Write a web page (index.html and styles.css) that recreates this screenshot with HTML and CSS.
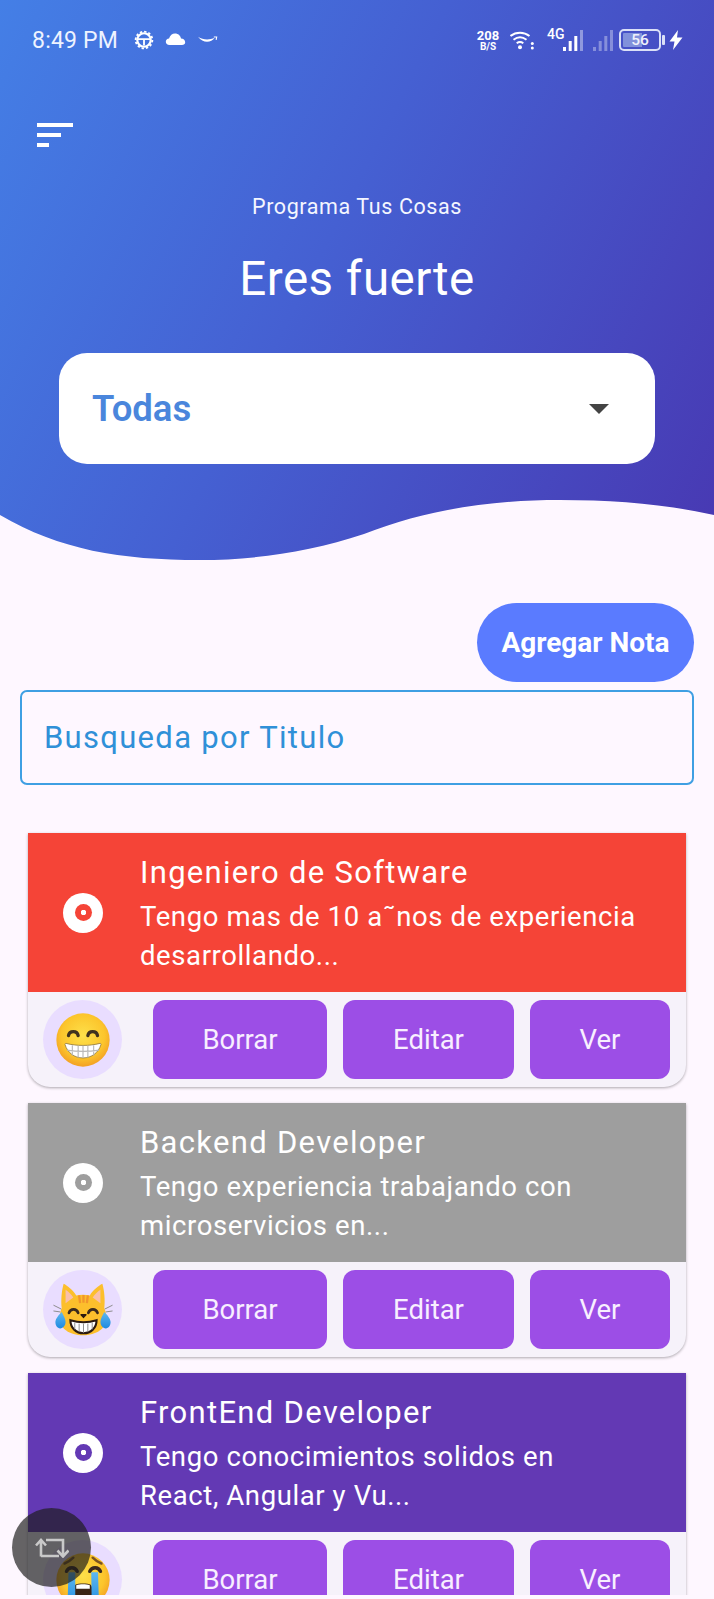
FILE: index.html
```html
<!DOCTYPE html>
<html lang="es">
<head>
<meta charset="utf-8">
<title>Programa Tus Cosas</title>
<link rel="stylesheet" href="styles.css">
</head>
<body>
<svg class="defs" width="0" height="0" aria-hidden="true">
  <defs>
    <radialGradient id="yel" cx="50%" cy="42%" r="58%">
      <stop offset="0" stop-color="#fde04a"/>
      <stop offset="0.7" stop-color="#fcc52c"/>
      <stop offset="1" stop-color="#f3a024"/>
    </radialGradient>
    <linearGradient id="tear" x1="0" y1="0" x2="0" y2="1">
      <stop offset="0" stop-color="#5fb8f0"/>
      <stop offset="1" stop-color="#1f8ae0"/>
    </linearGradient>
  </defs>
</svg>
<div class="app">
  <header class="hero">
    <div class="status">
      <div class="status-left">
        <span class="clock">8:49 PM</span>
        <svg class="ic-gear" viewBox="0 0 22 22"><circle cx="11" cy="11" r="7.400" fill="none" stroke="#fff" stroke-width="2.400"/><circle cx="11" cy="11" r="9.200" fill="none" stroke="#fff" stroke-width="2" stroke-dasharray="2.600 2.200"/><path d="M4 10h14M11 10v7" stroke="#fff" stroke-width="2" fill="none"/></svg>
        <svg class="ic-cloud" viewBox="0 0 22 13"><path d="M4.500 13C2 13 0.500 11.500 0.500 9.500 0.500 7.600 2 6.200 4 6 5 2.500 7.500 0.500 10.500 0.500 14 0.500 16.500 2.800 17 6 19.500 6.200 21.500 7.500 21.500 10 21.500 11.800 20 13 18 13Z" fill="#fff"/></svg>
        <svg class="ic-smile" viewBox="0 0 22 10"><path d="M0.500 2C6 5.500 13 5.800 19 3 15 9 6 9.500 0.500 2Z" fill="#fff"/><path d="M18 2.200 21.200 2.300 20.600 5.500" fill="none" stroke="#fff" stroke-width="1.200"/></svg>
      </div>
      <div class="status-right">
        <div class="speed"><span class="speed-n">208</span><span class="speed-u">B/S</span></div>
        <svg class="ic-wifi" viewBox="0 0 24 20"><path d="M0.500 6C6 1.500 14 1.500 19.500 6M3.500 9.700C7.500 6.800 12.500 6.800 16.500 9.700M6.700 13.300C8.700 11.800 11.300 11.800 13.300 13.300" fill="none" stroke="#fff" stroke-width="2"/><circle cx="10" cy="17.300" r="2" fill="#fff"/><circle cx="22.300" cy="13.500" r="1.500" fill="#fff"/><circle cx="22.300" cy="18" r="1.500" fill="#fff"/></svg>
        <span class="net-4g">4G</span>
        <svg class="ic-bars" viewBox="0 0 20 21"><rect x="0" y="17" width="3" height="4" fill="#fff"/><rect x="5.700" y="11" width="3" height="10" fill="#fff"/><rect x="11.300" y="6" width="3" height="15" fill="#fff"/><rect x="17" y="0" width="3" height="21" fill="#fff" fill-opacity=".4"/></svg>
        <svg class="ic-bars ic-bars-b" viewBox="0 0 20 21"><rect x="0" y="17" width="3" height="4" fill="#fff" fill-opacity=".35"/><rect x="5.700" y="11" width="3" height="10" fill="#fff" fill-opacity=".35"/><rect x="11.300" y="6" width="3" height="15" fill="#fff" fill-opacity=".35"/><rect x="17" y="0" width="3" height="21" fill="#fff" fill-opacity=".35"/></svg>
        <div class="battery"><div class="battery-body"><span class="battery-n">56</span></div><span class="battery-tip"></span></div>
        <svg class="ic-bolt" viewBox="0 0 14 20"><path d="M9 0 0.500 11.500H5.500L4 20 13.500 7.500H8Z" fill="#fff"/></svg>
      </div>
    </div>
    <button class="menu" aria-label="Menu"><span class="menu-l1"></span><span class="menu-l2"></span><span class="menu-l3"></span></button>
    <p class="eyebrow">Programa Tus Cosas</p>
    <h1 class="headline">Eres fuerte</h1>
    <div class="select"><span class="select-v">Todas</span><span class="caret"></span></div>
  </header>

  <div class="add-row"><button class="add">Agregar Nota</button></div>
  <div class="search"><span class="search-l">Busqueda por Titulo</span></div>

  <main class="list">
    <article class="card">
      <div class="card-top tone-red">
        <span class="dot"><span class="dot-in"></span></span>
        <div class="card-text">
          <h2 class="card-title">Ingeniero de Software</h2>
          <p class="card-desc">Tengo mas de 10 a˜nos de experiencia desarrollando...</p>
        </div>
      </div>
      <div class="card-bar">
        <span class="avatar">
          <svg class="emoji" viewBox="0 0 64 64">
            <circle cx="32" cy="32" r="27.500" fill="url(#yel)"/>
            <path d="M17 27.500c1-5.500 9-5.500 10 0M37 27.500c1-5.500 9-5.500 10 0" fill="none" stroke="#40321f" stroke-width="3.400" stroke-linecap="round"/>
            <path d="M14.500 35.500c11 2.800 24 2.800 35 0 1 0 1.200.6 1 1.400C48 45 41 50.500 32 50.500S16 45 13.500 36.900c-.2-.8 0-1.400 1-1.400z" fill="#fff" stroke="#8a7440" stroke-width=".8"/>
            <path d="M15.500 42.500c10 1.500 23 1.500 33 0M21 37.500v10.500M27 38v12M32 38v12.500M37 38v12M43 37.500v10.500" stroke="#b9b9b9" stroke-width="1.200" fill="none"/>
          </svg>
        </span>
        <button class="act act-a">Borrar</button>
        <button class="act act-b">Editar</button>
        <button class="act act-c">Ver</button>
      </div>
    </article>

    <article class="card">
      <div class="card-top tone-grey">
        <span class="dot"><span class="dot-in"></span></span>
        <div class="card-text">
          <h2 class="card-title">Backend Developer</h2>
          <p class="card-desc">Tengo experiencia trabajando con microservicios en...</p>
        </div>
      </div>
      <div class="card-bar">
        <span class="avatar">
          <svg class="emoji" viewBox="0 0 64 64">
            <path d="M12 5C16 7 22 12 25 17C29 16 35 16 39 17C42 12 48 7 52 5C54 12 55 22 54 30C56 35 56 38 56 41C56 51 46 58 32 58C18 58 8 51 8 41C8 38 8 35 10 30C9 22 10 12 12 5Z" fill="#fcbf2c"/>
            <path d="M14 11C17 13 20 16 22 19L14 25ZM50 11C47 13 44 16 42 19L50 25Z" fill="#f9c0ab"/>
            <path d="M28 17l1 8M32.500 16.500v8M37 17l-1 8" stroke="#f2962c" stroke-width="2.400" fill="none"/>
            <path d="M17.500 35c1.500-5 8-5 9.500 0M37.500 35c1.500-5 8-5 9.500 0" fill="none" stroke="#3b2a1e" stroke-width="2.800" stroke-linecap="round"/>
            <path d="M30 37h5l-2.500 2.600z" fill="#2b1a10" stroke="#2b1a10" stroke-width="1.500" stroke-linejoin="round"/>
            <path d="M19 42.500c8 2.500 19 2.500 27 0 0 8-6 13.500-13.500 13.500S19 50.500 19 42.500z" fill="#fff" stroke="#2b1a10" stroke-width="2.200"/>
            <path d="M23.500 45v7M28 46v8.500M32.500 46v9.500M37 46v8.500M41.500 45v7" stroke="#8a8a8a" stroke-width="1" fill="none"/>
            <path d="M1.500 27l8 4M1.500 33l7 1M62.500 27l-8 4M62.500 33l-7 1" stroke="#8a8a8a" stroke-width="1" fill="none"/>
            <path d="M10 34C12 38 14 41 14 44.500 14 48 11.500 51 8.500 51S3.500 48 3.500 44.500C3.500 41 7 37 10 34Z" fill="url(#tear)"/>
            <path d="M54 34C52 38 50 41 50 44.500 50 48 52.500 51 55.500 51S60.500 48 60.500 44.500C60.500 41 57 37 54 34Z" fill="url(#tear)"/>
          </svg>
        </span>
        <button class="act act-a">Borrar</button>
        <button class="act act-b">Editar</button>
        <button class="act act-c">Ver</button>
      </div>
    </article>

    <article class="card">
      <div class="card-top tone-purple">
        <span class="dot"><span class="dot-in"></span></span>
        <div class="card-text">
          <h2 class="card-title">FrontEnd Developer</h2>
          <p class="card-desc">Tengo conocimientos solidos en React, Angular y Vu...</p>
        </div>
      </div>
      <div class="card-bar">
        <span class="avatar">
          <svg class="emoji" viewBox="0 0 64 64">
            <circle cx="32" cy="32" r="27.500" fill="url(#yel)"/>
            <path d="M13 15c3-1 6-3 9-6M51 15c-3-1-6-3-9-6" fill="none" stroke="#7a5420" stroke-width="2.600" stroke-linecap="round"/>
            <path d="M15 23c2-5 9-5 11 0M39 23c2-5 9-5 11 0" fill="none" stroke="#3b2a1e" stroke-width="3.600" stroke-linecap="round"/>
            <path d="M24 37c3-2 13-2 16 0 2 3 3 8 2 13H22c-1-5 0-10 2-13z" fill="#3a2416"/>
            <path d="M25 37.500c4-1.500 10-1.500 14 0v3.500H25z" fill="#fff"/>
            <path d="M17 24h7v32c0 2-1 4-3.500 4S16 58 16 56z" fill="url(#tear)"/>
            <path d="M40.500 24h7l1 32c0 2-1 4-4 4s-3.500-2-3.500-4z" fill="url(#tear)"/>
          </svg>
        </span>
        <button class="act act-a">Borrar</button>
        <button class="act act-b">Editar</button>
        <button class="act act-c">Ver</button>
      </div>
    </article>
  </main>

  <div class="float">
    <svg class="ic-rot" viewBox="0 0 34 20"><path d="M6 18.500V3M1 7.500 6 2l5 5.500M6 18H24M11 2H28V17M22.500 12.500 28 18.500l5.500-6" fill="none" stroke="#c9c9c9" stroke-width="2.600"/></svg>
  </div>
</div>
</body>
</html>
```

FILE: styles.css
```css
* { box-sizing: border-box; }
html, body { margin: 0; padding: 0; }
body {
  width: 714px;
  height: 1599px;
  background: #fef7ff;
  font-family: Roboto, "Noto Sans", sans-serif;
  overflow: hidden;
}
.defs { display: block; height: 0; }
.app {
  position: relative;
  height: 1595px;
  overflow: hidden;
}

.hero {
  height: 562px;
  background: linear-gradient(117deg, #447fe6 0%, #4560d2 45%, #4838b2 100%);
  clip-path: path("M0 0H714V515C665 504 615 500 560 500C490 500 425 510 364 534C310 552 255 560 200 560C120 560 60 550 0 515Z");
  color: #fff;
}

.status {
  display: flex;
  justify-content: space-between;
  align-items: center;
  height: 80px;
  padding: 0 31px 0 32px;
}
.status-left { display: flex; align-items: center; }
.clock { font-size: 23px; color: #eef3ff; letter-spacing: 0.2px; width: 102px; }
.ic-gear { width: 20px; height: 20px; margin-right: 11px; }
.ic-cloud { width: 21px; height: 12px; margin-right: 11px; margin-top: -2px; }
.ic-smile { width: 21px; height: 9px; margin-top: -1px; }
.status-right { display: flex; align-items: center; }
.speed { display: flex; flex-direction: column; align-items: center; width: 24px; font-weight: 700; margin-right: 10px; }
.speed-n { font-size: 13px; line-height: 13px; }
.speed-u { font-size: 10px; line-height: 10px; }
.ic-wifi { width: 24px; height: 20px; margin-right: 13px; }
.net-4g { font-size: 14px; font-weight: 500; line-height: 14px; width: 17px; margin: -12px -1px 0 0; }
.ic-bars { width: 20px; height: 21px; display: block; margin-right: 10px; }
.ic-bars-b { margin-right: 6px; }
.battery { display: flex; align-items: center; margin-right: 4px; }
.battery-body {
  width: 42px;
  height: 22px;
  border: 2px solid #dbe0f7;
  border-radius: 5px;
  padding: 2px;
  display: flex;
  align-items: center;
  justify-content: center;
  background: linear-gradient(90deg, #8191db 0 56%, transparent 56%) content-box;
}
.battery-n { font-size: 15.500px; font-weight: 500; color: #eef0fb; }
.battery-tip { width: 3px; height: 10px; background: #dbe0f7; margin-left: 1px; border-radius: 1px; }
.ic-bolt { width: 14px; height: 20px; }

.menu {
  display: flex;
  flex-direction: column;
  gap: 6px;
  margin: 43px 0 0 37px;
  padding: 0;
  width: 36px;
  background: none;
  border: 0;
}
.menu span { display: block; height: 4px; background: #fff; }
.menu-l1 { width: 36px; }
.menu-l2 { width: 24px; }
.menu-l3 { width: 12px; }

.eyebrow {
  margin: 48px 0 0;
  text-align: center;
  font-size: 21.500px;
  line-height: 24px;
  letter-spacing: 0.6px;
  color: #f4f6ff;
}
.headline {
  margin: 34px 0 0;
  text-align: center;
  font-size: 47.500px;
  line-height: 52px;
  font-weight: 400;
  letter-spacing: 0.5px;
}
.select {
  display: flex;
  align-items: center;
  justify-content: space-between;
  width: 596px;
  height: 111px;
  margin: 48px 0 0 59px;
  padding: 0 46px 0 33px;
  background: #fff;
  border-radius: 28px;
}
.select-v { font-size: 36.500px; font-weight: 600; color: #4a86dc; }
.caret {
  width: 0;
  height: 0;
  border-left: 10px solid transparent;
  border-right: 10px solid transparent;
  border-top: 10px solid #444;
}

.add-row { display: flex; justify-content: flex-end; padding: 41px 20px 0 0; }
.add {
  width: 217px;
  height: 79px;
  border: 0;
  border-radius: 40px;
  background: #5a7bff;
  color: #fff;
  font: 700 28px Roboto, sans-serif;
}
.search {
  display: flex;
  align-items: center;
  height: 95px;
  margin: 8px 20px 0;
  padding-left: 22px;
  border: 2px solid #3f9fe3;
  border-radius: 7px;
}
.search-l { font-size: 31px; letter-spacing: 1.300px; color: #2f90d8; }

.list { display: flex; flex-direction: column; gap: 16px; padding: 48px 28px 0; }
.card {
  border-radius: 0 0 22px 22px;
  background: #f6f2fa;
  box-shadow: 0 1px 3px rgba(0, 0, 0, 0.32);
  overflow: hidden;
  flex: none;
}
.card-top { display: flex; align-items: center; height: 159px; padding-left: 35px; color: #fff; }
.tone-red { background: #f54437; --tone: #f54437; }
.tone-grey { background: #9e9e9e; --tone: #9e9e9e; }
.tone-purple { background: #6339b4; --tone: #6339b4; }
.dot {
  flex: none;
  display: flex;
  align-items: center;
  justify-content: center;
  width: 40px;
  height: 40px;
  border-radius: 50%;
  background: #fff;
  margin-right: 37px;
}
.dot-in {
  width: 17px;
  height: 17px;
  border-radius: 50%;
  background: radial-gradient(circle, #fff 0 2.500px, var(--tone) 3px);
}
.card-text { flex: 1; min-width: 0; padding-top: 5px; }
.card-title {
  margin: 0;
  font-size: 31px;
  line-height: 36px;
  font-weight: 400;
  letter-spacing: 1.300px;
  color: #fff;
}
.card-desc {
  margin: 6px 0 0;
  width: 500px;
  font-size: 27.500px;
  line-height: 39px;
  letter-spacing: 0.6px;
  color: #fff;
}
.card-bar { display: flex; align-items: center; height: 95px; padding: 0 15px; gap: 16px; }
.avatar {
  flex: none;
  display: flex;
  align-items: center;
  justify-content: center;
  width: 79px;
  height: 79px;
  margin-right: 15px;
  border-radius: 50%;
  background: #e9ddff;
}
.emoji { width: 62px; height: 62px; display: block; }
.act {
  flex: none;
  height: 79px;
  border: 0;
  border-radius: 12px;
  background: #9c4ee6;
  color: #f8efff;
  font: 400 27.500px Roboto, sans-serif;
}
.act-a { width: 174px; }
.act-b { width: 171px; }
.act-c { width: 140px; }

.float {
  position: absolute;
  left: 12px;
  top: 1508px;
  display: flex;
  align-items: center;
  justify-content: center;
  width: 79px;
  height: 79px;
  border-radius: 50%;
  background: rgba(28, 28, 28, 0.68);
}
.ic-rot { width: 34px; height: 20px; }
```
